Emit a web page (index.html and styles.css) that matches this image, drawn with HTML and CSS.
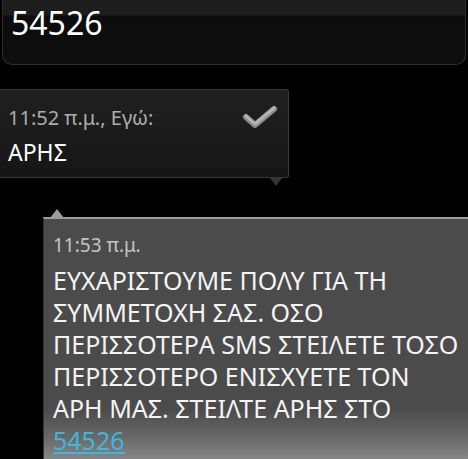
FILE: index.html
```html
<!DOCTYPE html>
<html lang="el">
<head>
    <meta charset="UTF-8">
    <meta name="viewport" content="width=device-width, initial-scale=1.0">
    <title>Μηνύματα</title>
    <link rel="stylesheet" href="styles.css">
</head>
<body>
    <div class="epafi">
        <div class="epafi-arithmos">54526</div>
    </div>
    <div class="minima stalmeno">
        <div class="minima-ora">11:52 π.μ., Εγώ:</div>
        <div class="minima-keimeno">ΑΡΗΣ</div>
        <svg class="tsek" width="36" height="26" viewBox="0 0 36 26">
            <path d="M4 13 L13 21 L32 5" fill="none" stroke="#8a8a8a" stroke-width="6" stroke-linecap="round" stroke-linejoin="round"/>
            <path d="M4 12 L13 20 L32 4" fill="none" stroke="#b5b5b5" stroke-width="3" stroke-linecap="round" stroke-linejoin="round"/>
        </svg>
    </div>
    <div class="minima lifthen">
        <div class="minima-ora">11:53 π.μ.</div>
        <div class="minima-keimeno">ΕΥΧΑΡΙΣΤΟΥΜΕ ΠΟΛΥ ΓΙΑ ΤΗ ΣΥΜΜΕΤΟΧΗ ΣΑΣ. ΟΣΟ ΠΕΡΙΣΣΟΤΕΡΑ SMS ΣΤΕΙΛΕΤΕ ΤΟΣΟ ΠΕΡΙΣΣΟΤΕΡΟ ΕΝΙΣΧΥΕΤΕ ΤΟΝ ΑΡΗ ΜΑΣ. ΣΤΕΙΛΤΕ ΑΡΗΣ ΣΤΟ <a href="#">54526</a></div>
    </div>
</body>
</html>
```

FILE: styles.css
```css
body {
    margin: 0;
    background-color: #000;
    color: white;
    font-family: "Noto Sans", "Open Sans", sans-serif;
    overflow: hidden;
}
.epafi {
    height: 64px;
    margin: 0 2px;
    border: 1px solid #2e2e2e;
    border-top: none;
    border-radius: 0 0 10px 10px;
    background: linear-gradient(#1d1d1d 0, #1d1d1d 15px, #0c0c0c 16px, #0e0e0e 100%);
}
.epafi-arithmos {
    font-size: 32px;
    line-height: 46px;
    padding-left: 8px;
}
.minima {
    position: relative;
    box-sizing: border-box;
}
.stalmeno {
    margin-top: 24px;
    width: 289px;
    height: 89px;
    padding: 15px 8px 0 8px;
    border: 1px solid #3a3a3a;
    border-left: none;
    border-radius: 0 3px 3px 0;
    background: linear-gradient(#202020, #161616);
}
/* βελάκι κάτω δεξιά */
.stalmeno::after {
    content: "";
    position: absolute;
    right: 5px;
    bottom: -9px;
    border-left: 7px solid transparent;
    border-right: 7px solid transparent;
    border-top: 9px solid #333;
}
.tsek {
    position: absolute;
    top: 14px;
    right: 10px;
}
.minima-ora {
    font-size: 20px;
    color: #adadad;
    line-height: 26px;
}
.stalmeno .minima-keimeno {
    font-size: 23px;
    line-height: 36px;
    margin-top: 3px;
}
.lifthen {
    margin-top: 39px;
    margin-left: 43px;
    height: 260px;
    padding: 13px 8px 0 9px;
    border-top: 2px solid #9c9c9c;
    border-left: 1px solid #333;
    background: linear-gradient(#4b4b4b 0, #4b4b4b 190px, #6a6a6a 220px, #8c8c8c 243px);
}
/* βελάκι πάνω αριστερά */
.lifthen::before {
    content: "";
    position: absolute;
    left: 6px;
    top: -10px;
    border-left: 7px solid transparent;
    border-right: 7px solid transparent;
    border-bottom: 9px solid #9c9c9c;
}
.lifthen .minima-ora {
    font-size: 19px;
    line-height: 26px;
    color: #c4c4c4;
}
.lifthen .minima-keimeno {
    font-size: 25px;
    line-height: 32px;
    margin-top: 6px;
    color: #f4f4f4;
}
.minima-keimeno a {
    color: #3fb6dd;
}
```
